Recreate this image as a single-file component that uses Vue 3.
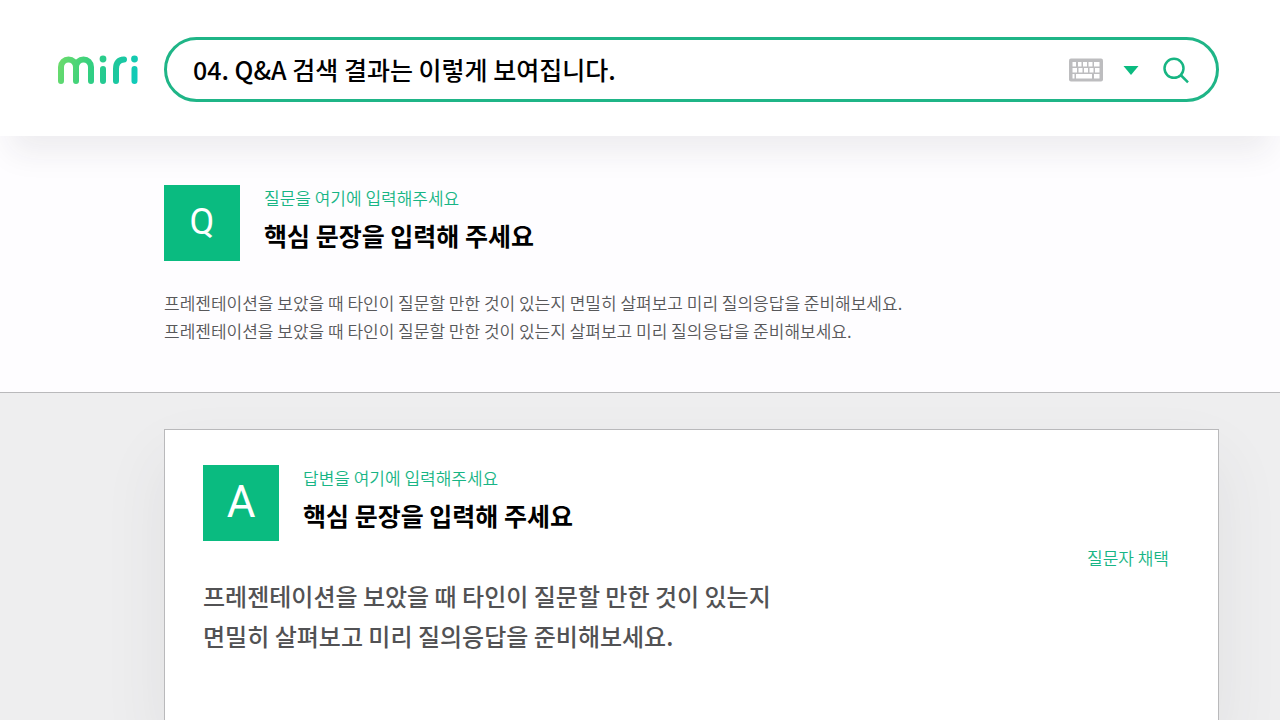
<script setup>
import { ref } from 'vue'

const query = ref('04. Q&A 검색 결과는 이렇게 보여집니다.')

const keyRows = [
  [[3.5, 3.5], [9, 3.5], [14, 4], [19.5, 4], [25, 5.5]],
  [[3.5, 4.5], [9.5, 4], [15, 4], [20.5, 4], [26, 4.5]],
  [[3.5, 2], [7, 16], [25, 5.5]]
]
</script>

<template>
  <div class="page">
    <header class="header">
      <a class="logo" href="#" aria-label="miri">
        <svg viewBox="0 0 82 30" width="82" height="30" aria-hidden="true">
          <defs>
            <linearGradient id="brand" gradientUnits="userSpaceOnUse" x1="0" y1="4" x2="80" y2="26">
              <stop offset="0" stop-color="#6fdc6b" />
              <stop offset="0.4" stop-color="#35d07f" />
              <stop offset="0.7" stop-color="#1dc79b" />
              <stop offset="1" stop-color="#0fcbbb" />
            </linearGradient>
          </defs>
          <g fill="none" stroke="url(#brand)" stroke-width="6" stroke-linecap="round">
            <path d="M4 26V12a7.500 7.500 0 0 1 15 0V26M19 12a7.500 7.500 0 0 1 15 0V26" />
            <path d="M46 14V26M59 26V14Q59 5 67 4.500M77.500 14L77.490 26" />
          </g>
          <g fill="url(#brand)">
            <circle cx="46" cy="4" r="3.400" />
            <circle cx="77.500" cy="4" r="3.400" />
          </g>
        </svg>
      </a>
      <form class="search" role="search" @submit.prevent>
        <input v-model="query" class="query" type="text" aria-label="검색어" />
        <button class="tool keyboard" type="button" aria-label="키보드">
          <svg viewBox="0 0 34 24" width="34" height="24" aria-hidden="true">
            <rect width="34" height="23" y="0.500" rx="2" fill="#bdbdbf" />
            <g v-for="(row, r) in keyRows" :key="r" fill="#fff">
              <rect v-for="key in row" :key="key[0]" :x="key[0]" :y="4 + r * 6" :width="key[1]" height="4.500" />
            </g>
          </svg>
        </button>
        <button class="tool arrow" type="button" aria-label="검색 옵션">
          <svg viewBox="0 0 16 10" width="16" height="10" aria-hidden="true">
            <path d="M0.500 1h15L8 10z" fill="#0bbb80" />
          </svg>
        </button>
        <button class="tool" type="submit" aria-label="검색">
          <svg viewBox="0 0 28 28" width="28" height="28" aria-hidden="true">
            <g fill="none" stroke="#17b582" stroke-width="2.500">
              <circle cx="12" cy="12.300" r="9.500" />
              <path d="M18.700 19L26 26.300" />
            </g>
          </svg>
        </button>
      </form>
    </header>

    <main class="content">
      <section class="question">
        <div class="entry">
          <div class="tile tile-q">Q</div>
          <div>
            <p class="label">질문을 여기에 입력해주세요</p>
            <h2 class="title">핵심 문장을 입력해 주세요</h2>
          </div>
        </div>
        <p class="detail">
          프레젠테이션을 보았을 때 타인이 질문할 만한 것이 있는지 면밀히 살펴보고 미리 질의응답을 준비해보세요.<br />
          프레젠테이션을 보았을 때 타인이 질문할 만한 것이 있는지 살펴보고 미리 질의응답을 준비해보세요.
        </p>
      </section>

      <section class="answer">
        <article class="card">
          <div class="entry">
            <div class="tile tile-a">A</div>
            <div>
              <p class="label">답변을 여기에 입력해주세요</p>
              <h2 class="title">핵심 문장을 입력해 주세요</h2>
            </div>
          </div>
          <p class="chosen">질문자 채택</p>
          <p class="reply">
            프레젠테이션을 보았을 때 타인이 질문할 만한 것이 있는지<br />
            면밀히 살펴보고 미리 질의응답을 준비해보세요.
          </p>
        </article>
      </section>
    </main>
  </div>
</template>

<style>
body {
  margin: 0;
}
</style>

<style scoped>
.page {
  display: flex;
  flex-direction: column;
  min-height: 100vh;
  background: #fefdff;
  color: #000;
  font-family: "Noto Sans CJK KR", sans-serif;
}

p,
h2 {
  margin: 0;
}

.header {
  position: relative;
  display: flex;
  align-items: center;
  gap: 25px;
  padding: 37px 61px 34px 57px;
  background: #fff;
  box-shadow: 0 26px 30px -10px rgba(40, 40, 50, 0.08);
}

.logo {
  display: flex;
  flex: none;
}

.search {
  display: flex;
  flex: 1;
  align-items: center;
  box-sizing: border-box;
  height: 65px;
  padding: 0 26px;
  border: 3px solid #1fb587;
  border-radius: 33px;
  background: #fff;
}

.query {
  flex: 1;
  min-width: 0;
  height: 40px;
  margin-right: 16px;
  padding: 0 0 2px;
  box-sizing: border-box;
  border: 0;
  outline: 0;
  background: none;
  color: #000;
  font-family: inherit;
  font-size: 25px;
  font-weight: 500;
}

.tool {
  display: flex;
  flex: none;
  padding: 0;
  border: 0;
  background: none;
  cursor: pointer;
}

.arrow {
  margin: 0 23px 0 20px;
}

.content {
  display: flex;
  flex: 1;
  flex-direction: column;
}

.question {
  padding: 49px 61px 47px 164px;
  border-bottom: 1px solid #b9b9bb;
}

.entry {
  display: flex;
  gap: 24px;
}

.tile {
  flex: none;
  width: 76px;
  height: 76px;
  background: #0abb80;
  color: #fff;
  font-family: Roboto, sans-serif;
  line-height: 74px;
  text-align: center;
}

.tile-q {
  font-size: 36px;
}

.tile-a {
  font-size: 44px;
}

.label {
  color: #18b585;
  font-size: 17px;
  font-weight: 350;
  line-height: 26px;
}

.title {
  font-size: 25px;
  font-weight: 700;
  line-height: 48px;
}

.detail {
  margin-top: 28px;
  color: #58585a;
  font-size: 17px;
  font-weight: 350;
  line-height: 28px;
}

.answer {
  display: flex;
  flex: 1;
  flex-direction: column;
  overflow: hidden;
  padding: 36px 61px 0 164px;
  background: #eeeeef;
}

.card {
  flex: 1;
  padding: 35px 49px 35px 38px;
  border: 1px solid #b9b9bb;
  border-bottom: 0;
  background: #fff;
  box-shadow: 0 30px 60px rgba(60, 60, 75, 0.08);
}

.chosen {
  margin-top: 5px;
  color: #18b585;
  font-size: 17px;
  font-weight: 350;
  line-height: 24px;
  text-align: right;
}

.reply {
  margin-top: 6px;
  color: #525254;
  font-size: 24px;
  font-weight: 500;
  line-height: 40px;
}
</style>
